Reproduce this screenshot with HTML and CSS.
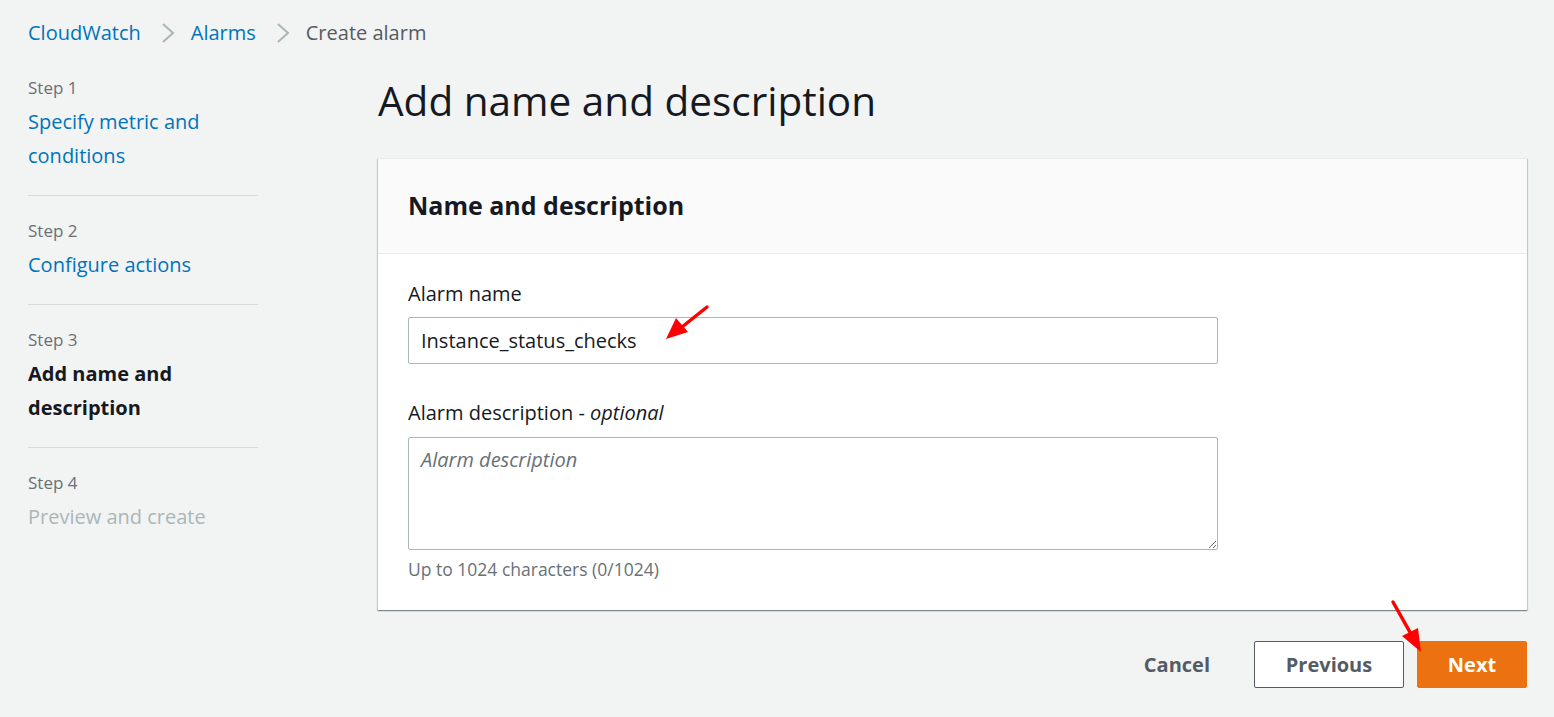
FILE: index.html
```html
<!DOCTYPE html>
<html lang="en">
<head>
<meta charset="utf-8">
<title>Create alarm</title>
<link rel="stylesheet" href="styles.css">
</head>
<body>
<nav class="breadcrumbs">
  <a class="crumb link" href="#">CloudWatch</a>
  <svg class="chev" viewBox="0 0 14 22" width="14" height="22"><path d="M2 2 L12 11 L2 20" fill="none" stroke="#aab7b8" stroke-width="2"/></svg>
  <a class="crumb link" href="#">Alarms</a>
  <svg class="chev" viewBox="0 0 14 22" width="14" height="22"><path d="M2 2 L12 11 L2 20" fill="none" stroke="#aab7b8" stroke-width="2"/></svg>
  <span class="crumb current">Create alarm</span>
</nav>
<div class="layout">
  <ul class="steps">
    <li class="step"><div class="step-label">Step 1</div><a class="step-link" href="#">Specify metric and conditions</a></li>
    <li class="step"><div class="step-label">Step 2</div><a class="step-link" href="#">Configure actions</a></li>
    <li class="step"><div class="step-label">Step 3</div><span class="step-link active">Add name and description</span></li>
    <li class="step"><div class="step-label">Step 4</div><span class="step-link disabled">Preview and create</span></li>
  </ul>
  <main class="main">
    <h1 class="title">Add name and description</h1>
    <section class="panel">
      <header class="panel-head"><h2>Name and description</h2></header>
      <div class="panel-body">
        <label class="field-label" for="an">Alarm name</label>
        <input id="an" class="text-input" type="text" value="Instance_status_checks">
        <label class="field-label second" for="ad">Alarm description - <i>optional</i></label>
        <textarea id="ad" class="text-area" placeholder="Alarm description"></textarea>
        <div class="hint">Up to 1024 characters (0/1024)</div>
      </div>
    </section>
    <div class="actions">
      <button class="btn btn-link">Cancel</button>
      <button class="btn btn-normal">Previous</button>
      <button class="btn btn-primary">Next</button>
    </div>
  </main>
</div>
<svg class="annotations" width="1554" height="717" viewBox="0 0 1554 717">
  <line x1="707" y1="307" x2="682" y2="327" stroke="#ff0000" stroke-width="3.5" stroke-linecap="round"/>
  <polygon points="666,339 676,318 688,332" fill="#ff0000"/>
  <line x1="1393" y1="602" x2="1411" y2="634" stroke="#ff0000" stroke-width="3.5" stroke-linecap="round"/>
  <polygon points="1421,652 1402,636 1418,628" fill="#ff0000"/>
</svg>
</body>
</html>
```
FILE: styles.css
```css
* { box-sizing: border-box; }
html, body { margin: 0; padding: 0; }
body {
  background: #f2f3f3;
  font-family: "Open Sans", "Noto Sans", Arial, sans-serif;
  color: #16191f;
  padding: 19px 27px 0 28px;
  position: relative;
  min-height: 717px;
}
a { text-decoration: none; }

.breadcrumbs {
  display: flex;
  align-items: center;
  height: 28px;
  font-size: 20px;
  line-height: 28px;
}
.crumb.link { color: #0073bb; }
.crumb.current { color: #545b64; }
.chev { margin: 0 16px 0 20px; }

.layout {
  display: grid;
  grid-template-columns: 230px 1fr;
  column-gap: 120px;
  margin-top: 6px;
}

.steps { list-style: none; margin: 0; padding: 0; }
.step {
  padding: 22px 0 22px;
  border-top: 1px solid #d5dbdb;
}
.step:first-child { border-top: none; padding-top: 22px; }
.step-label {
  font-size: 17px;
  line-height: 26px;
  color: #687078;
}
.step-link {
  display: block;
  margin-top: 4px;
  font-size: 20px;
  line-height: 34px;
  color: #0073bb;
}
.step-link.active { color: #16191f; font-weight: 700; }
.step-link.disabled { color: #aab7b8; }

.main { min-width: 0; }
.title {
  margin: 24px 0 33px;
  font-size: 40.5px;
  line-height: 48px;
  font-weight: 400;
  color: #16191f;
}

.panel {
  background: #fff;
  border-top: 1px solid #eaeded;
  box-shadow: 0 1px 1px 0 rgba(0,28,36,.3), 1px 1px 1px 0 rgba(0,28,36,.15), -1px 1px 1px 0 rgba(0,28,36,.15);
}
.panel-head {
  background: #fafafa;
  border-bottom: 1px solid #eaeded;
  padding: 29px 30px 31px;
}
.panel-head h2 {
  margin: 0;
  font-size: 25px;
  line-height: 34px;
  font-weight: 700;
}
.panel-body {
  display: flex;
  flex-direction: column;
  align-items: flex-start;
  padding: 26px 30px 30px;
}
.field-label {
  font-size: 20px;
  line-height: 28px;
  color: #16191f;
}
.field-label.second { margin-top: 35px; }
.text-input, .text-area {
  width: 810px;
  margin-top: 9px;
  border: 1px solid #aab7b8;
  border-radius: 2px;
  background: #fff;
  font-family: "Open Sans", "Noto Sans", Arial, sans-serif;
  font-size: 20px;
  color: #16191f;
  padding: 0 12px;
  outline: none;
}
.text-input { height: 47px; }
.text-area {
  height: 113px;
  margin-top: 10px;
  padding-top: 8px;
  line-height: 28px;
  resize: vertical;
}
.text-area::placeholder { color: #687078; font-style: italic; }
.hint {
  margin-top: 8px;
  font-size: 17.5px;
  line-height: 22px;
  color: #687078;
}

.actions {
  display: flex;
  justify-content: flex-end;
  align-items: center;
  margin-top: 31px;
}
.btn {
  height: 47px;
  font-family: "Open Sans", "Noto Sans", Arial, sans-serif;
  font-size: 20px;
  font-weight: 700;
  border-radius: 2px;
  cursor: pointer;
  padding: 0 20px;
}
.btn-link {
  background: transparent;
  border: none;
  color: #545b64;
  margin-right: 24px;
}
.btn-normal {
  width: 150px;
  background: #fff;
  border: 1px solid #545b64;
  color: #545b64;
  margin-right: 13px;
}
.btn-primary {
  width: 110px;
  background: #ec7211;
  border: 1px solid #ec7211;
  color: #fff;
}

.annotations {
  position: absolute;
  left: 0;
  top: 0;
  pointer-events: none;
}
```
